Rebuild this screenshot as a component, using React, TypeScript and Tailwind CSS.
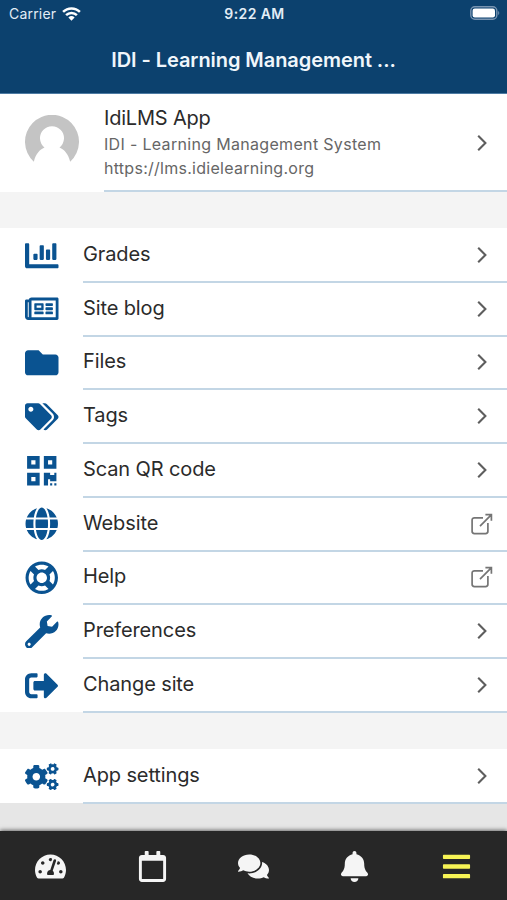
import React from "react";
import type { IconType } from "react-icons";
import {
  FaBars,
  FaBell,
  FaChartBar,
  FaCogs,
  FaComments,
  FaFolder,
  FaGlobe,
  FaQrcode,
  FaRegCalendar,
  FaRegLifeRing,
  FaRegNewspaper,
  FaSignOutAlt,
  FaTachometerAlt,
  FaTags,
  FaWrench,
} from "react-icons/fa";

type MenuItem = { label: string; icon: IconType; external?: boolean };

const items: MenuItem[] = [
  { label: "Grades", icon: FaChartBar },
  { label: "Site blog", icon: FaRegNewspaper },
  { label: "Files", icon: FaFolder },
  { label: "Tags", icon: FaTags },
  { label: "Scan QR code", icon: FaQrcode },
  { label: "Website", icon: FaGlobe, external: true },
  { label: "Help", icon: FaRegLifeRing, external: true },
  { label: "Preferences", icon: FaWrench },
  { label: "Change site", icon: FaSignOutAlt },
];

const tabs: IconType[] = [FaTachometerAlt, FaRegCalendar, FaComments, FaBell, FaBars];

function Chevron() {
  return (
    <svg width="10" height="18" viewBox="0 0 10 18" fill="none" stroke="#5e5e5e" strokeWidth="2.1" className="mr-5 shrink-0">
      <path d="M1.2 1.7 8.4 9l-7.2 7.3" />
    </svg>
  );
}

function OpenOutline() {
  return (
    <svg width="22" height="22" viewBox="0 0 22 22" fill="none" stroke="#757575" strokeWidth="1.7" className="mr-[14px] shrink-0">
      <path d="M12 4.8H3.4a2.3 2.3 0 0 0-2.3 2.3v11.2a2.3 2.3 0 0 0 2.3 2.3h11.2a2.3 2.3 0 0 0 2.3-2.3V10" />
      <path d="M14.4 1.7h6v6M20.2 1.9 9 13.1" />
    </svg>
  );
}

function MenuRow({ label, icon: Icon, external }: MenuItem) {
  return (
    <div className="flex h-[53.78px] bg-white pl-[25px]">
      <div className="mt-px flex w-[58px] items-center text-[#0a5391]">
        <Icon className="h-[33.5px] w-[33.5px]" />
      </div>
      {/* the divider hangs one pixel over the next row */}
      <div className="relative z-10 -mb-px flex flex-1 items-center justify-between border-b-2 border-[#c3d6e5] pt-px">
        <span className="pb-[2px] text-[20px] leading-6 tracking-[-0.12px]">{label}</span>
        {external ? <OpenOutline /> : <Chevron />}
      </div>
    </div>
  );
}

function StatusBar() {
  return (
    <div className="grid h-7 grid-cols-3 items-center pl-[9px] pr-[7px] text-[14px] leading-4 text-[#e3edf6]">
      <div className="flex items-center gap-[6px]">
        <span className="tracking-[0.2px]">Carrier</span>
        <svg width="19" height="14" viewBox="0 0 19 14" fill="none" stroke="#fff" strokeWidth="2.5">
          <path d="M1.1 4.9a11.9 11.9 0 0 1 16.8 0M4.1 8.2a7.6 7.6 0 0 1 10.8 0" />
          <path d="M9.5 13.7 6.4 10.5a4.5 4.5 0 0 1 6.2 0Z" fill="#fff" stroke="none" />
        </svg>
      </div>
      <span className="text-center font-semibold tracking-[0.4px]">9:22 AM</span>
      <svg width="30" height="14" viewBox="0 0 30 14" className="-mt-[2px] justify-self-end">
        <rect x="0.8" y="0.8" width="26" height="12.4" rx="4" fill="none" stroke="#7894b1" strokeWidth="1.4" />
        <rect x="2.6" y="2.5" width="22.4" height="9" rx="2.2" fill="#fff" />
        <path d="M28.2 5a2.4 2.4 0 0 1 0 4Z" fill="#7894b1" />
      </svg>
    </div>
  );
}

export default function App() {
  return (
    <div className="flex h-[900px] w-[507px] flex-col overflow-hidden bg-[#f4f4f4] font-['Inter',sans-serif] text-[#2b2b2b]">
      <header className="h-[94px] shrink-0 border-b border-[#4d7ba3] bg-[#0c416e]">
        <StatusBar />
        <h1 className="mt-4 text-center text-[20px] font-semibold leading-8 tracking-[-0.06px] text-[#f0f6fb]">IDI - Learning Management ...</h1>
      </header>

      {/* Account */}
      <section className="flex h-[98px] shrink-0 bg-white pl-[25px]">
        <div className="w-[79px] pt-[21px]">
          <svg width="54" height="54" viewBox="0 0 54 54">
            <path
              d="M8.8 46.7A27 27 0 1 1 45.2 46.7C43 38.500 39.500 34.800 34.500 32.500A12 12 0 1 0 19.500 32.500C14.500 34.800 11 38.500 8.800 46.700Z"
              fill="#c4c4c4"
            />
          </svg>
        </div>
        <div className="flex flex-1 items-center justify-between border-b-2 border-[#c3d6e5] pt-px">
          <div className="pt-px">
            <p className="text-[20px] leading-6 tracking-[-0.2px]">IdiLMS App</p>
            <p className="pt-[2px] text-[16px] leading-6 tracking-[0.32px] text-[#666]">IDI - Learning Management System</p>
            <p className="text-[16px] leading-6 tracking-[0.27px] text-[#666]">https://lms.idielearning.org</p>
          </div>
          <Chevron />
        </div>
      </section>

      <nav className="mt-9 shrink-0">
        {items.map((item) => (
          <MenuRow key={item.label} {...item} />
        ))}
      </nav>

      <div className="mt-[37px] shrink-0">
        <MenuRow label="App settings" icon={FaCogs} />
      </div>
      <div className="flex-1 bg-[#e6e6e6]" />

      <footer className="relative grid h-[69px] shrink-0 grid-cols-5 bg-[#272727] pt-[2px] shadow-[0_-1px_4px_rgba(0,0,0,0.55)]">
        {tabs.map((Tab, i) => (
          <div key={i} className={i === 4 ? "flex items-center justify-center text-[#f7f455]" : "flex items-center justify-center text-[#f5f5f5]"}>
            <Tab className="h-[31px] w-[31px]" />
          </div>
        ))}
      </footer>
    </div>
  );
}
